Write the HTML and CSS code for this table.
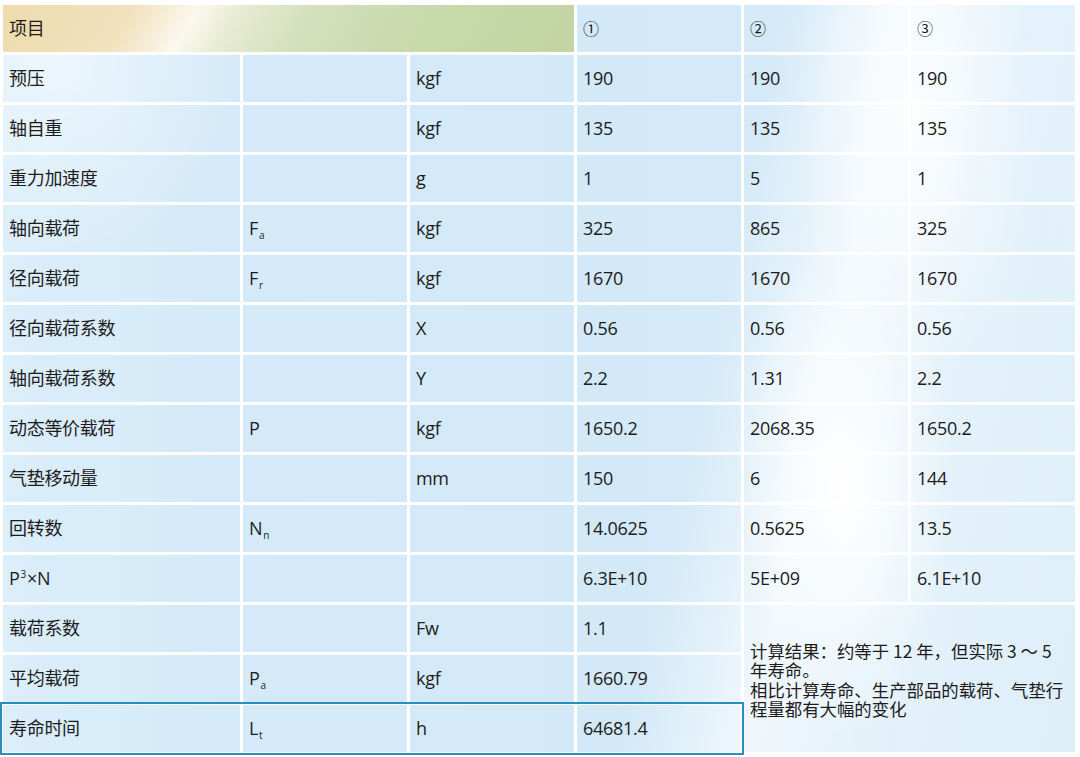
FILE: index.html
```html
<!DOCTYPE html>
<html lang="zh-CN">
<head>
<meta charset="utf-8">
<title>寿命计算</title>
<link rel="stylesheet" href="styles.css">
</head>
<body>
<div class="table">
  <div class="c hd-main">项目</div>
  <div class="c circ">①</div><div class="c circ">②</div><div class="c circ">③</div>

  <div class="c">预压</div><div class="c"></div><div class="c">kgf</div><div class="c">190</div><div class="c">190</div><div class="c">190</div>
  <div class="c">轴自重</div><div class="c"></div><div class="c">kgf</div><div class="c">135</div><div class="c">135</div><div class="c">135</div>
  <div class="c">重力加速度</div><div class="c"></div><div class="c">g</div><div class="c">1</div><div class="c">5</div><div class="c">1</div>
  <div class="c">轴向载荷</div><div class="c">F<sub>a</sub></div><div class="c">kgf</div><div class="c">325</div><div class="c">865</div><div class="c">325</div>
  <div class="c">径向载荷</div><div class="c">F<sub>r</sub></div><div class="c">kgf</div><div class="c">1670</div><div class="c">1670</div><div class="c">1670</div>
  <div class="c">径向载荷系数</div><div class="c"></div><div class="c">X</div><div class="c">0.56</div><div class="c">0.56</div><div class="c">0.56</div>
  <div class="c">轴向载荷系数</div><div class="c"></div><div class="c">Y</div><div class="c">2.2</div><div class="c">1.31</div><div class="c">2.2</div>
  <div class="c">动态等价载荷</div><div class="c">P</div><div class="c">kgf</div><div class="c">1650.2</div><div class="c">2068.35</div><div class="c">1650.2</div>
  <div class="c">气垫移动量</div><div class="c"></div><div class="c">mm</div><div class="c">150</div><div class="c">6</div><div class="c">144</div>
  <div class="c">回转数</div><div class="c">N<sub>n</sub></div><div class="c"></div><div class="c">14.0625</div><div class="c">0.5625</div><div class="c">13.5</div>
  <div class="c">P<sup>3</sup>×N</div><div class="c"></div><div class="c"></div><div class="c">6.3E+10</div><div class="c">5E+09</div><div class="c">6.1E+10</div>
  <div class="c">载荷系数</div><div class="c"></div><div class="c">Fw</div><div class="c">1.1</div>
  <div class="c note"><div class="note-text">计算结果：约等于 12 年，但实际 3 ～ 5<br>年寿命。<br>相比计算寿命、生产部品的载荷、气垫行<br>程量都有大幅的变化</div></div>
  <div class="c">平均载荷</div><div class="c">P<sub>a</sub></div><div class="c">kgf</div><div class="c">1660.79</div>
  <div class="c last c1">寿命时间</div><div class="c last c2">L<sub>t</sub></div><div class="c last c3">h</div><div class="c last c4">64681.4</div>
  <div class="hl"></div>
</div>
</body>
</html>
```

FILE: styles.css
```css
html, body {
  margin: 0;
  padding: 0;
  background: #ffffff;
}

body {
  width: 1080px;
  height: 757px;
  overflow: hidden;
  font-family: "Open Sans", "Noto Sans CJK SC", sans-serif;
  color: #1e1b1c;
}

.table {
  display: grid;
  grid-template-columns: 237px repeat(5, 164px);
  grid-template-rows: repeat(15, 47px);
  gap: 3px;
  padding: 5px 0 0 3px;
}

.c {
  display: block;
  height: 47px;
  line-height: 47px;
  padding-left: 6px;
  font-size: 18px;
  letter-spacing: -0.3px;
  white-space: nowrap;
  background:
    radial-gradient(ellipse 110px 250px at 845px 490px, rgba(255,255,255,1), rgba(255,255,255,0)),
    radial-gradient(ellipse 120px 270px at 915px 120px, rgba(255,255,255,0.8), rgba(255,255,255,0)),
    linear-gradient(102deg, rgba(255,255,255,0) 0%, rgba(255,255,255,0) 63%, rgba(255,255,255,0.65) 73%, rgba(255,255,255,0.35) 82%, rgba(255,255,255,0.15) 100%),
    radial-gradient(ellipse 180px 200px at 60px 60px, rgba(255,255,255,0.5), rgba(255,255,255,0)),
    linear-gradient(90deg, #dbeefa 0, #d5eaf8 220px, #d3e9f7 620px, #d8ecf9 1080px);
  background-attachment: fixed;
}

.hd-main {
  grid-column: 1 / 4;
  background: linear-gradient(120deg, #eedbae 0%, #f1e1bd 22%, #fbf8ee 33%, #e7ebd2 40%, #d4e0bd 52%, #c8d9ab 72%, #c4d5a3 100%);
  background-attachment: scroll;
}

.circ {
  font-family: "Noto Sans CJK SC", sans-serif;
  font-size: 16px;
}

sub, sup {
  font-size: 10px;
  line-height: 0;
  margin-left: 1px;
}

sub {
  vertical-align: -4px;
}

sup {
  vertical-align: 7px;
  margin-right: 1px;
}

.note {
  grid-column: 5 / 7;
  grid-row: 13 / 16;
  height: auto;
  display: flex;
  align-items: center;
  font-family: "Noto Sans CJK SC", sans-serif;
  letter-spacing: 0;
  padding-left: 6px;
}

.note-text {
  font-size: 17.4px;
  line-height: 19.5px;
  padding-top: 2px;
}

.c1 { grid-area: 15 / 1; }
.c2 { grid-area: 15 / 2; }
.c3 { grid-area: 15 / 3; }
.c4 { grid-area: 15 / 4; }

.hl {
  grid-column: 1 / 5;
  grid-row: 15;
  outline: 2px solid #2a8dbb;
  outline-offset: 1px;
  pointer-events: none;
}
```
